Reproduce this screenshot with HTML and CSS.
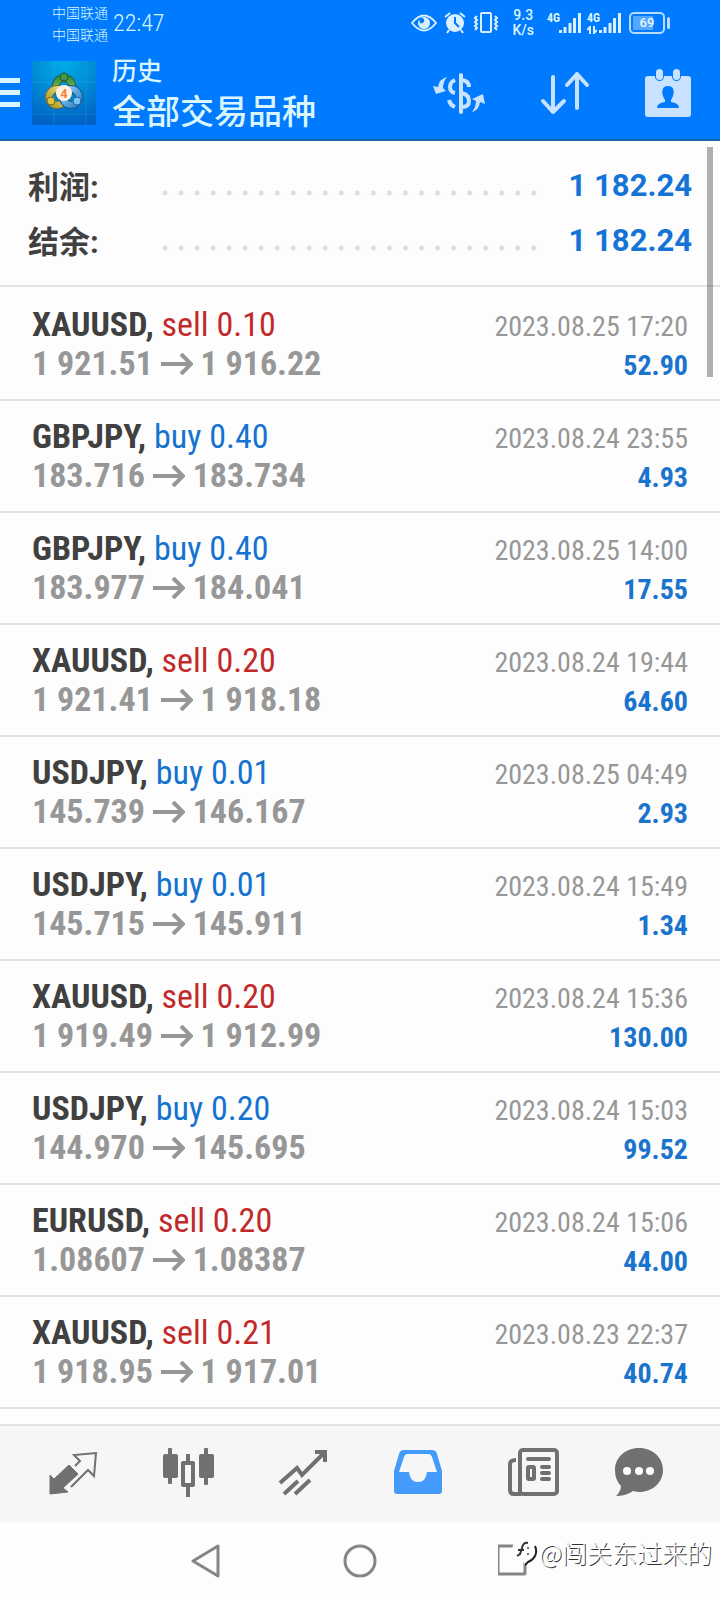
FILE: index.html
```html
<!DOCTYPE html>
<html lang="zh-CN">
<head>
<meta charset="utf-8">
<meta name="viewport" content="width=device-width, initial-scale=1">
<title>历史</title>
<link rel="stylesheet" href="styles.css">
</head>
<body>
<header class="top">
  <div class="status">
    <div class="carriers"><span>中国联通</span><span>中国联通</span></div>
    <time class="clock">22:47</time>
    <div class="status-icons">
      <svg class="st" width="26" height="32" viewBox="0 0 26 32"><path d="M1 16Q13 1 25 16Q13 31 1 16Z" fill="none" stroke="#d8f0ff" stroke-width="2"/><circle cx="13" cy="16" r="6" fill="#d8f0ff"/><path d="M8 12a4 4 0 0 1 5 0 3 3 0 0 1-4 4z" fill="#007aff"/></svg>
      <svg class="st" width="24" height="32" viewBox="0 0 24 32"><circle cx="12" cy="16" r="9" fill="#d8f0ff"/><path d="M2 10l5-4M22 10l-5-4M6 23l-2 3M18 23l2 3" stroke="#d8f0ff" stroke-width="2" fill="none"/><path d="M12 10v6l4 4" stroke="#007aff" stroke-width="2" fill="none"/></svg>
      <svg class="st" width="26" height="32" viewBox="0 0 26 32" fill="none" stroke="#d8f0ff" stroke-width="2"><rect x="8" y="6" width="10" height="19" rx="1"/><path d="M4 9l-2 2 2 2-2 2 2 2-2 2 2 2-2 2M22 9l2 2-2 2 2 2-2 2 2 2-2 2 2 2"/></svg>
      <div class="speed"><span>9.3</span><span>K/s</span></div>
      <div class="signal"><span class="net">4G</span><svg width="22" height="22" viewBox="0 0 22 22" fill="none" stroke="#d8f0ff" stroke-width="3"><path d="M1.500 21v-3M6 21v-6M11 21V11M15.500 21V6M20.500 21V1"/></svg></div>
      <div class="signal"><span class="net">4G</span><svg class="data" width="10" height="8" viewBox="0 0 10 8" fill="none" stroke="#d8f0ff" stroke-width="2"><path d="M3 8V1L0 4M7 0v7l3-3"/></svg><svg width="22" height="22" viewBox="0 0 22 22" fill="none" stroke="#d8f0ff" stroke-width="3"><path d="M1.500 21v-3M6 21v-6M11 21V11M15.500 21V6M20.500 21V1"/></svg></div>
      <div class="battery"><span>69</span></div>
    </div>
  </div>
  <div class="appbar">
    <button class="icon-btn menu" aria-label="菜单"><svg width="20" height="30" viewBox="0 0 20 30" fill="#d9f6ff"><path d="M0 0h20v5H0zM0 12h20v5H0zM0 24h20v5H0z"/></svg></button>
    <svg class="logo" width="64" height="64" viewBox="0 0 64 64">
      <defs>
        <radialGradient id="bg" cx=".5" cy="0" r="1"><stop offset="0" stop-color="#00aee8"/><stop offset=".5" stop-color="#008cd4"/><stop offset="1" stop-color="#0062c4"/></radialGradient>
        <linearGradient id="gg" x1="0" y1="0" x2="0" y2="1"><stop offset="0" stop-color="#3d9040"/><stop offset="1" stop-color="#93cf60"/></linearGradient>
        <linearGradient id="yg" x1="1" y1="0" x2="0" y2="1"><stop offset="0" stop-color="#e6e08a"/><stop offset="1" stop-color="#b09c28"/></linearGradient>
        <linearGradient id="cg" x1="0" y1="0" x2="1" y2="1"><stop offset="0" stop-color="#8fd0f5"/><stop offset="1" stop-color="#2e84c8"/></linearGradient>
      </defs>
      <rect width="64" height="64" fill="url(#bg)"/>
      <path d="M22 0v64M54 0v64M0 21h64M0 53h64" stroke="#44b5e4" stroke-opacity=".25"/>
      <circle cx="32" cy="25" r="8" fill="none" stroke="#235d37" stroke-width="8"/><circle cx="32" cy="25" r="8" fill="none" stroke="url(#gg)" stroke-width="6"/>
      <circle cx="25" cy="36" r="8" fill="none" stroke="#756c31" stroke-width="8"/><circle cx="25" cy="36" r="8" fill="none" stroke="url(#yg)" stroke-width="6"/>
      <circle cx="39" cy="36" r="8" fill="none" stroke="#17548c" stroke-width="8"/><circle cx="39" cy="36" r="8" fill="none" stroke="url(#cg)" stroke-width="6"/>
      <circle cx="32" cy="16" r="4" fill="#3f974b" stroke="#205a38"/><circle cx="19" cy="40" r="4" fill="#e1c445" stroke="#786524"/><circle cx="45" cy="40" r="4" fill="#77c3f3" stroke="#20649e"/>
      <circle cx="32" cy="32" r="8" fill="#fff2e4"/>
      <text x="32" y="37" class="logo-num">4</text>
    </svg>
    <h1 class="titles"><span class="sub">历史</span><span class="main-title">全部交易品种</span></h1>
    <div class="actions">
      <button class="icon-btn" aria-label="货币"><svg width="52" height="44" viewBox="0 0 52 44"><path d="M28 4v37" stroke="#c8e2ff" stroke-width="4" stroke-linecap="round" fill="none"/><path d="M29 9q7 1 7 7M29 22q7 2 7 8t-7 6M22 9q-5 2-5 7t5 6M22 36q-5-2-6-7" fill="none" stroke="#c8e2ff" stroke-width="4"/><path d="M14 6Q6 8 5 16L0 15l3 8 10-3-3-3Q10 11 14 6ZM39 41q7-2 8-10l5 2-2-10-11 5 4 2q0 6-4 11Z" fill="#c8e2ff"/></svg></button>
      <button class="icon-btn" aria-label="排序"><svg width="50" height="44" viewBox="0 0 50 44" fill="none" stroke="#c8e2ff" stroke-width="4" stroke-linecap="round" stroke-linejoin="round"><path d="M13 6v35M3 30l10 11 11-11M37 37V3M27 14L37 3l10 11"/></svg></button>
      <button class="icon-btn" aria-label="日期"><svg width="46" height="48" viewBox="0 0 46 48"><rect y="7" width="46" height="41" rx="3" fill="#c8e2ff"/><rect x="10" y="-1" width="9" height="13" rx="4.500" fill="#007aff"/><rect x="27" y="-1" width="9" height="13" rx="4.500" fill="#007aff"/><rect x="11" y="0" width="7" height="11" rx="3.500" fill="#c8e2ff"/><rect x="28" y="0" width="7" height="11" rx="3.500" fill="#c8e2ff"/><path d="M23 17c7 0 7 8 3 14v2q8 1 8 6H12q0-5 8-6v-2c-4-6-4-14 3-14z" fill="#007aff"/></svg></button>
    </div>
  </div>
</header>

<main class="content">
  <dl class="summary">
    <div class="sum-row"><dt>利润:</dt><i class="dots"></i><dd>1 182.24</dd></div>
    <div class="sum-row"><dt>结余:</dt><i class="dots"></i><dd>1 182.24</dd></div>
  </dl>
  <ul class="deals">
    <li class="deal"><p class="sym">XAUUSD, <span class="sell">sell 0.10</span></p><time class="date">2023.08.25 17:20</time><p class="price">1 921.51 <svg class="arrow" viewBox="0 0 32 22"><path d="M0 11h30M20 1l10 10-10 10"/></svg> 1 916.22</p><p class="profit">52.90</p></li>
    <li class="deal"><p class="sym">GBPJPY, <span class="buy">buy 0.40</span></p><time class="date">2023.08.24 23:55</time><p class="price">183.716 <svg class="arrow" viewBox="0 0 32 22"><path d="M0 11h30M20 1l10 10-10 10"/></svg> 183.734</p><p class="profit">4.93</p></li>
    <li class="deal"><p class="sym">GBPJPY, <span class="buy">buy 0.40</span></p><time class="date">2023.08.25 14:00</time><p class="price">183.977 <svg class="arrow" viewBox="0 0 32 22"><path d="M0 11h30M20 1l10 10-10 10"/></svg> 184.041</p><p class="profit">17.55</p></li>
    <li class="deal"><p class="sym">XAUUSD, <span class="sell">sell 0.20</span></p><time class="date">2023.08.24 19:44</time><p class="price">1 921.41 <svg class="arrow" viewBox="0 0 32 22"><path d="M0 11h30M20 1l10 10-10 10"/></svg> 1 918.18</p><p class="profit">64.60</p></li>
    <li class="deal"><p class="sym">USDJPY, <span class="buy">buy 0.01</span></p><time class="date">2023.08.25 04:49</time><p class="price">145.739 <svg class="arrow" viewBox="0 0 32 22"><path d="M0 11h30M20 1l10 10-10 10"/></svg> 146.167</p><p class="profit">2.93</p></li>
    <li class="deal"><p class="sym">USDJPY, <span class="buy">buy 0.01</span></p><time class="date">2023.08.24 15:49</time><p class="price">145.715 <svg class="arrow" viewBox="0 0 32 22"><path d="M0 11h30M20 1l10 10-10 10"/></svg> 145.911</p><p class="profit">1.34</p></li>
    <li class="deal"><p class="sym">XAUUSD, <span class="sell">sell 0.20</span></p><time class="date">2023.08.24 15:36</time><p class="price">1 919.49 <svg class="arrow" viewBox="0 0 32 22"><path d="M0 11h30M20 1l10 10-10 10"/></svg> 1 912.99</p><p class="profit">130.00</p></li>
    <li class="deal"><p class="sym">USDJPY, <span class="buy">buy 0.20</span></p><time class="date">2023.08.24 15:03</time><p class="price">144.970 <svg class="arrow" viewBox="0 0 32 22"><path d="M0 11h30M20 1l10 10-10 10"/></svg> 145.695</p><p class="profit">99.52</p></li>
    <li class="deal"><p class="sym">EURUSD, <span class="sell">sell 0.20</span></p><time class="date">2023.08.24 15:06</time><p class="price">1.08607 <svg class="arrow" viewBox="0 0 32 22"><path d="M0 11h30M20 1l10 10-10 10"/></svg> 1.08387</p><p class="profit">44.00</p></li>
    <li class="deal"><p class="sym">XAUUSD, <span class="sell">sell 0.21</span></p><time class="date">2023.08.23 22:37</time><p class="price">1 918.95 <svg class="arrow" viewBox="0 0 32 22"><path d="M0 11h30M20 1l10 10-10 10"/></svg> 1 917.01</p><p class="profit">40.74</p></li>
  </ul>
  <div class="scrollbar"></div>
</main>

<nav class="tabs">
  <button class="icon-btn" aria-label="行情"><svg width="52" height="52" viewBox="0 0 52 52"><path d="M3 27l4 4L22 17l9 9-15 14 5 4-18 2z" fill="#707070" stroke="#707070" stroke-linejoin="round"/><path d="M28 18l5-5-6-6 22-2-2 23-6-6-17 17" fill="none" stroke="#707070" stroke-width="2"/></svg></button>
  <button class="icon-btn" aria-label="图表"><svg width="52" height="52" viewBox="0 0 52 52" fill="#707070"><rect x="1" y="6" width="15" height="24" rx="2"/><rect x="6" y="0" width="4" height="36" rx="1"/><rect x="37" y="6" width="15" height="24" rx="2"/><rect x="42" y="0" width="4" height="37" rx="1"/><path d="M24 6h4v7h3q2 0 2 2v22q0 2-2 2h-3v10h-4V39h-3q-2 0-2-2V15q0-2 2-2h3zm-1 11v18h6V17z"/></svg></button>
  <button class="icon-btn" aria-label="交易"><svg width="52" height="52" viewBox="0 0 52 52" fill="none" stroke="#707070" stroke-width="4"><path d="M3 35l17-15 5 7L47 5M38 4h10v10M7 46l14-13M18 46l15-14"/></svg></button>
  <button class="icon-btn" aria-label="历史" aria-current="page"><svg width="52" height="52" viewBox="0 0 52 52"><path d="M12 2h28q4 0 5 4l5 17v20q0 3-3 3H5q-3 0-3-3V23L7 6q1-4 5-4zm3 4q-2 0-3 3L7 24h10q1 10 9 10t9-10h10L40 9q-1-3-3-3z" fill="#449bfb"/></svg></button>
  <button class="icon-btn" aria-label="新闻"><svg width="52" height="52" viewBox="0 0 52 52" fill="none" stroke="#707070" stroke-width="4"><rect x="13" y="2" width="37" height="44" rx="3"/><path d="M14 46H7q-4 0-4-4V16q0-4 6-4" /><path d="M21 11h21M35 19h7M35 25h7M35 31h7" stroke-linecap="round"/><rect x="21" y="19" width="6" height="12" rx="1"/></svg></button>
  <button class="icon-btn" aria-label="消息"><svg width="52" height="52" viewBox="0 0 52 52"><path d="M26 0c14 0 24 10 24 22S40 44 26 44q-3 0-6-1-7 5-17 5 5-5 5-10Q2 32 2 22C2 10 12 0 26 0z" fill="#707070"/><g fill="#fff"><circle cx="14" cy="23" r="4"/><circle cx="26" cy="23" r="4"/><circle cx="37" cy="23" r="4"/></g></svg></button>
</nav>

<footer class="sysnav">
  <button class="icon-btn" aria-label="返回"><svg width="32" height="34" viewBox="0 0 32 34"><path d="M28 2v30L3 17z" fill="none" stroke="#858585" stroke-width="3" stroke-linejoin="round"/></svg></button>
  <button class="icon-btn" aria-label="主页"><svg width="34" height="34" viewBox="0 0 34 34"><circle cx="17" cy="17" r="15" fill="none" stroke="#858585" stroke-width="3"/></svg></button>
  <button class="icon-btn" aria-label="最近"><svg width="32" height="34" viewBox="0 0 32 34"><rect x="0" y="2" width="27" height="28" rx="1" fill="none" stroke="#858585" stroke-width="3"/></svg></button>
  <div class="watermark">
    <svg width="28" height="30" viewBox="0 0 28 30"><path d="M13 1c15 0 14 22 3 24l-3 3v-3C-3 27-3 1 13 1z" fill="#fff"/><path d="M24 9c3 7 0 13-7 16l-3 3" fill="none" stroke="#222" stroke-width="2"/><path d="M17 6q-5-1-6 5l-2 6-3 2M7 13h6" fill="none" stroke="#333" stroke-width="2"/><circle cx="17" cy="11" r="1" fill="#444"/><circle cx="17" cy="17" r="1" fill="#444"/></svg>
    <span>@闯关东过来的</span>
  </div>
</footer>
</body>
</html>
```

FILE: styles.css
```css
* { box-sizing: border-box; }

body {
  margin: 0;
  min-height: 100vh;
  display: flex;
  flex-direction: column;
  background: #fdfdfd;
  color: #404040;
  font-family: "Roboto Condensed", Roboto, "Noto Sans CJK SC", sans-serif;
}

p, dl, dd, ul, h1 { margin: 0; padding: 0; }
svg { display: block; }

.icon-btn {
  display: block;
  padding: 0;
  border: 0;
  background: none;
}

/* Header */
.top {
  background: #007aff;
  border-bottom: 2px solid #1c64b4;
  color: #d9f6ff;
}

.status {
  display: flex;
  align-items: center;
  height: 46px;
  padding: 0 49px 0 52px;
}

.carriers {
  display: flex;
  flex-direction: column;
  font-family: "Noto Sans CJK SC", sans-serif;
  font-size: 14px;
  font-weight: 300;
  line-height: 22px;
}

.clock {
  margin-left: 5px;
  font-size: 24px;
  font-weight: 300;
}

.status-icons {
  display: flex;
  align-items: center;
  gap: 6px;
  margin-left: auto;
}

.speed {
  display: flex;
  flex-direction: column;
  align-items: center;
  margin: 0 7px;
  font-family: Roboto, sans-serif;
  font-size: 14px;
  font-weight: 500;
  line-height: 15px;
}

.signal {
  position: relative;
  display: flex;
  align-items: flex-end;
  padding-left: 12px;
}

.net {
  position: absolute;
  left: 0;
  top: 0;
  font-size: 12px;
  font-weight: 700;
  line-height: 12px;
}

.data {
  position: absolute;
  left: 0;
  bottom: 0;
}

.battery {
  position: relative;
  width: 36px;
  height: 22px;
  margin: 0 6px 0 2px;
  border: 2px solid #b5dcff;
  border-radius: 5px;
  background: linear-gradient(90deg, #54a6ff 70%, #007aff 70%);
  background-clip: content-box;
  padding: 2px;
  color: #e8f8ff;
  font-family: Roboto, sans-serif;
  font-size: 13px;
  font-weight: 500;
  line-height: 14px;
  text-align: center;
}

.battery::after {
  content: "";
  position: absolute;
  right: -7px;
  top: 3px;
  width: 3px;
  height: 12px;
  border-radius: 2px;
  background: #b5dcff;
}

.appbar {
  display: flex;
  align-items: center;
  height: 93px;
  padding-right: 29px;
}

.logo { margin-left: 12px; }

.logo-num {
  font-family: Roboto, sans-serif;
  font-size: 13px;
  font-weight: 700;
  text-anchor: middle;
  fill: #ed873f;
}

.titles {
  display: flex;
  flex-direction: column;
  margin-left: 16px;
  padding-bottom: 3px;
  font-family: "Noto Sans CJK SC", sans-serif;
  font-weight: 500;
}

.sub { font-size: 25px; line-height: 38px; }
.main-title { font-size: 34px; line-height: 44px; }

.actions {
  display: flex;
  align-items: center;
  gap: 55px;
  margin-left: auto;
}

/* Summary */
.content {
  position: relative;
  flex: 1;
}

.summary {
  padding: 20px 28px 21px;
  border-bottom: 2px solid #e2e2e2;
}

.sum-row {
  display: flex;
  align-items: center;
  height: 48px;
  font-family: Roboto, sans-serif;
  font-size: 31px;
  font-weight: 700;
}

.sum-row + .sum-row { margin-top: 7px; }
.sum-row dt { width: 129px; padding-bottom: 2px; font-family: Roboto, "Noto Sans CJK SC", sans-serif; }
.sum-row dd { width: 150px; color: #1473d6; text-align: right; }

.dots {
  flex: 1;
  height: 6px;
  margin-top: 16px;
  background: radial-gradient(circle at 8px 3px, #dedede 2px, transparent 3px) 0 0 / 16px 6px round;
}

/* Deals */
.deals {
  padding-top: 2px;
  list-style: none;
}

.deal {
  display: grid;
  grid-template-columns: 1fr auto;
  align-items: baseline;
  padding: 15px 32px 16px;
  border-bottom: 2px solid #e2e2e2;
}

.sym, .price {
  font-size: 34px;
  font-weight: 700;
  line-height: 40px;
  white-space: nowrap;
}

.price { line-height: 39px; color: #979797; }
.sell, .buy { font-weight: 400; }
.sell { color: #c02a2a; }
.buy { color: #1473d0; }

.arrow {
  display: inline-block;
  width: 32px;
  height: 22px;
  fill: none;
  stroke: #979797;
  stroke-width: 4;
}

.date { font-size: 28px; color: #979797; }

.profit {
  font-size: 28px;
  font-weight: 700;
  color: #1a73cc;
  text-align: right;
}

.scrollbar {
  position: absolute;
  top: 6px;
  right: 7px;
  width: 6px;
  height: 230px;
  background: rgba(0, 0, 0, 0.3);
}

/* Bottom bars */
.tabs {
  display: grid;
  grid-template-columns: repeat(5, 115fr) 98fr;
  justify-items: center;
  padding: 22px 32px 22px 15px;
  border-top: 2px solid #e2e2e2;
  background: #f6f6f6;
}

.sysnav {
  position: relative;
  display: flex;
  justify-content: center;
  align-items: center;
  gap: 121px;
  height: 78px;
}

.watermark {
  position: absolute;
  right: 8px;
  bottom: 31px;
  display: flex;
  align-items: center;
  color: #fff;
  font-family: "Noto Sans CJK SC", sans-serif;
  font-size: 25px;
  font-weight: 300;
  line-height: 34px;
  text-shadow: 1px 1px 0 #333;
}
```
